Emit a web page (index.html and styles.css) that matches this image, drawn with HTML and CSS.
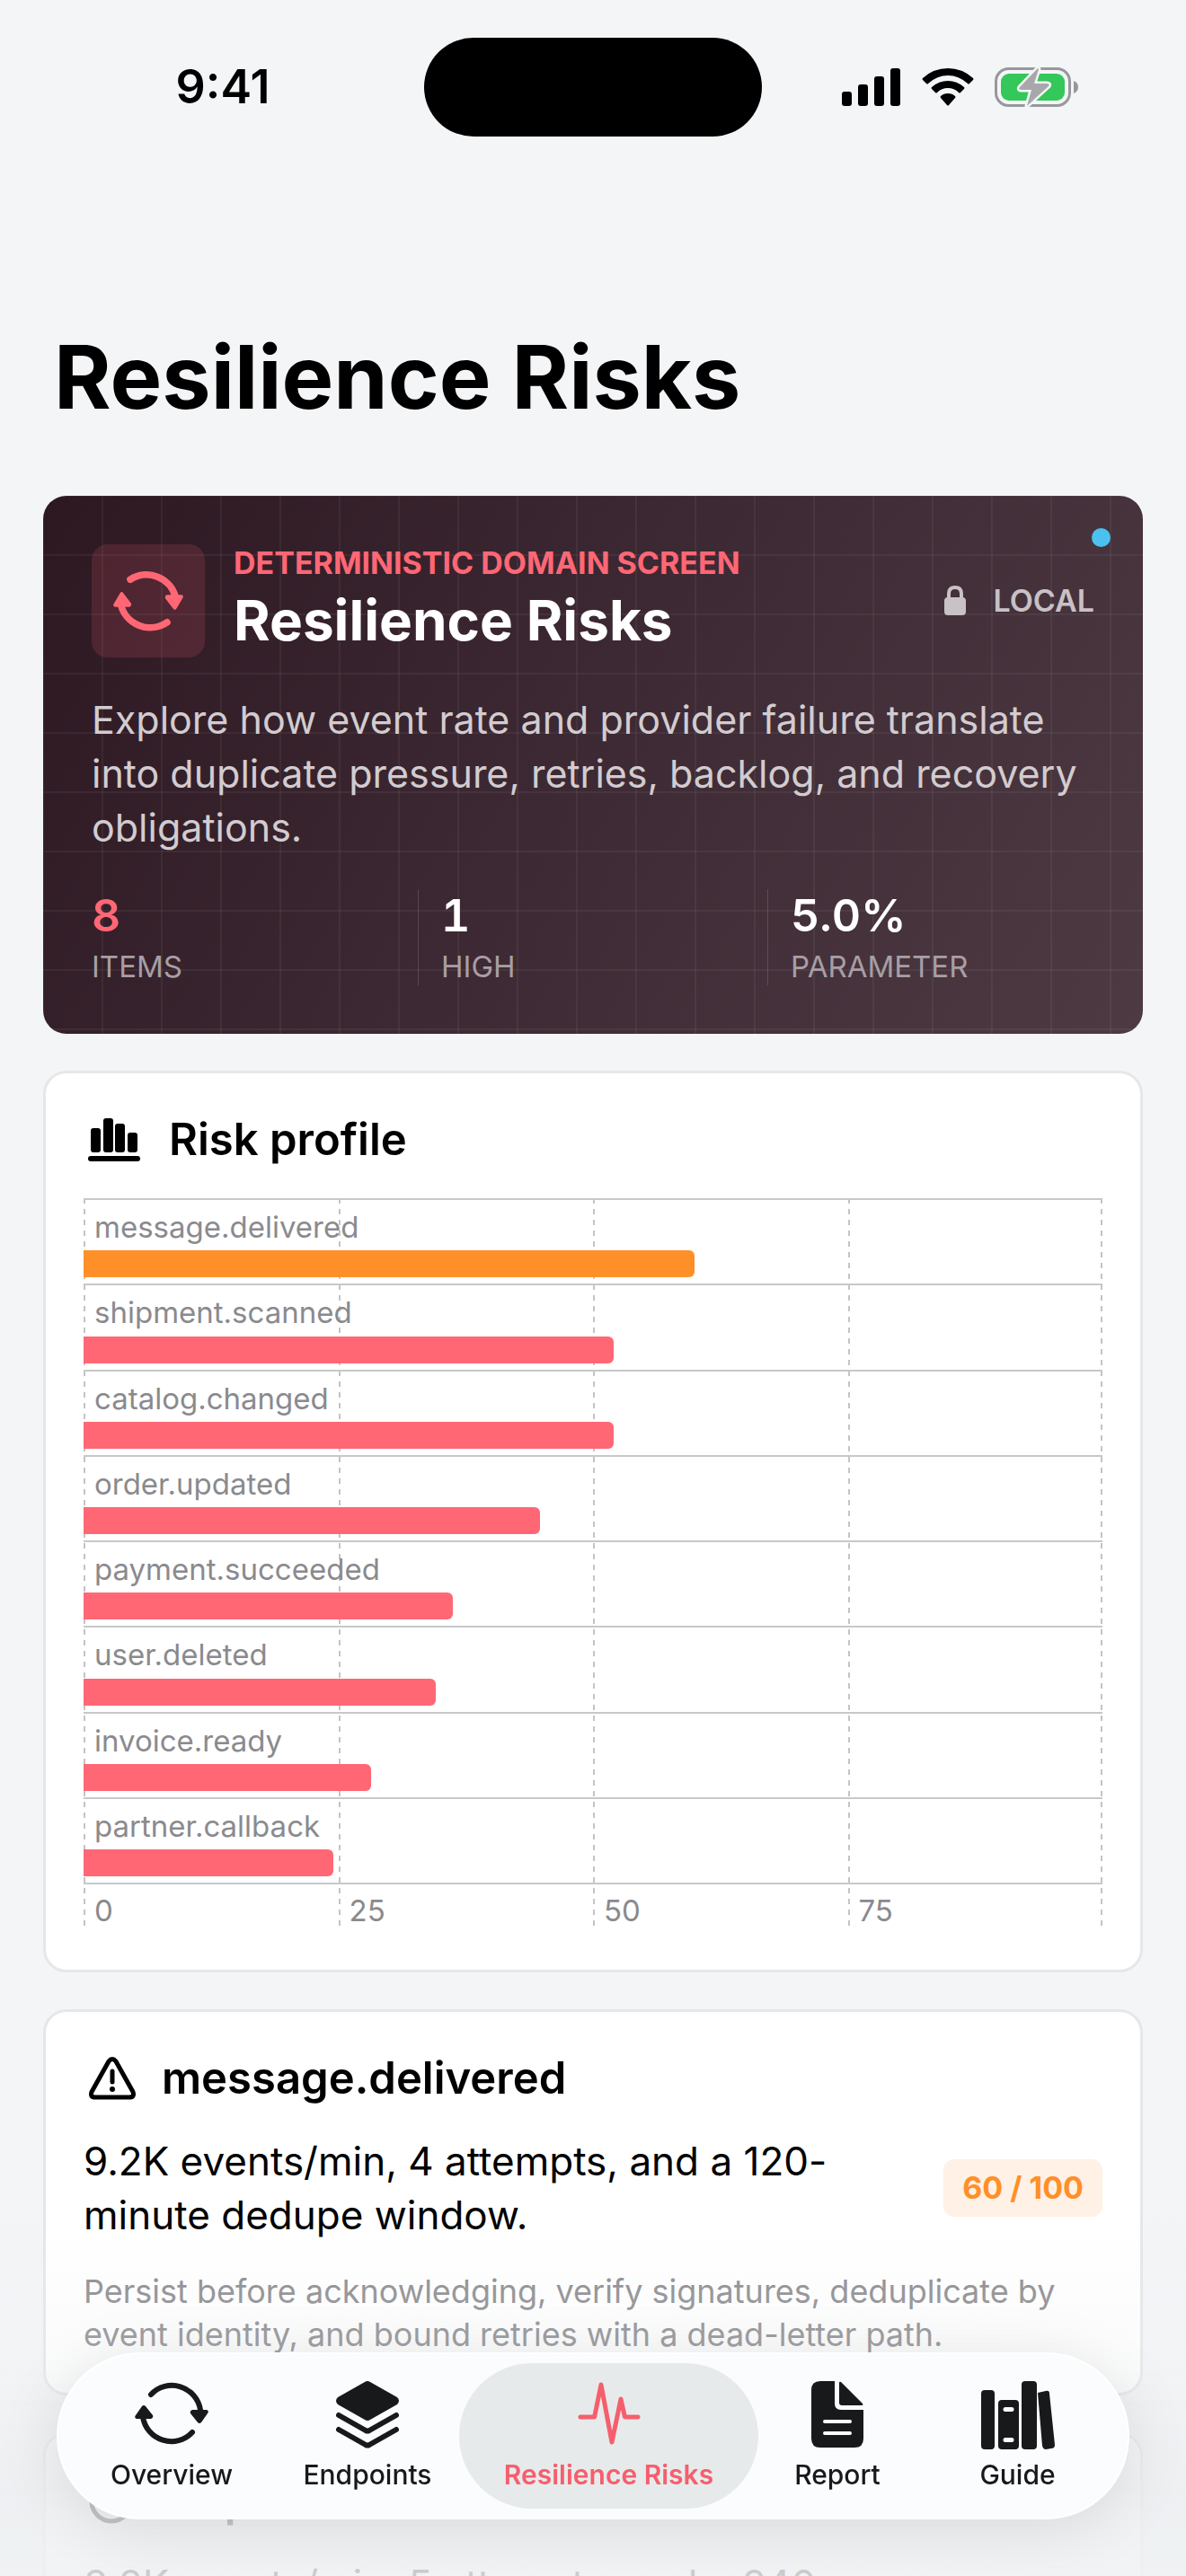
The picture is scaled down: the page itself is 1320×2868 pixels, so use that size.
FILE: index.html
```html
<!DOCTYPE html>
<html lang="en">
<head>
<meta charset="utf-8">
<meta name="viewport" content="width=device-width, initial-scale=1">
<title>Resilience Risks</title>
<link rel="stylesheet" href="styles.css">
</head>
<body>
<svg class="defs" aria-hidden="true">
  <symbol id="cycle" viewBox="0 0 84 72">
    <path d="M19 15A32 32 0 0 1 74 32M65 57A32 32 0 0 1 10 40" fill="none" stroke="currentColor" stroke-width="6" stroke-linecap="round"/>
    <path d="M65 32H81Q84 33 82 36L75 46Q73 48 71 46L63 36Q62 33 65 32ZM19 42H3Q0 41 2 38L9 28Q11 26 13 28L21 38Q22 41 19 42Z" fill="currentColor"/>
  </symbol>
  <symbol id="cycle-bold" viewBox="0 0 84 84">
    <path d="M21 17A35 35 0 0 1 74 38M64 67A35 35 0 0 1 10 46" fill="none" stroke="currentColor" stroke-width="8" stroke-linecap="round"/>
    <path d="M64 35H81Q84 36 82 39L75 51Q73 54 71 51L62 39Q61 36 64 35ZM20 49H3Q0 48 2 45L9 33Q11 30 13 33L22 45Q23 48 20 49Z" fill="currentColor"/>
  </symbol>
</svg>

<header class="status">
  <time class="status-time">9:41</time>
  <div class="island"></div>
  <div class="status-icons">
    <svg width="66" height="42" viewBox="0 0 66 42"><rect y="26" width="11" height="16" rx="3"/><rect x="18" y="18" width="11" height="24" rx="3"/><rect x="36" y="9" width="11" height="33" rx="3"/><rect x="54" width="11" height="42" rx="3"/></svg>
    <svg width="58" height="42" viewBox="0 0 58 42"><path d="M29 0Q45 0 57 11Q58 12 57 13L53 17Q52 18 51 17Q41 8 29 8T7 17Q6 18 5 17L1 13Q0 12 1 11Q13 0 29 0ZM29 14Q39 14 47 21Q48 22 47 23L43 27Q42 28 41 27Q36 22 29 22T17 27Q16 28 15 27L11 23Q10 22 11 21Q19 14 29 14ZM29 28Q34 28 37 31Q38 32 37 33L30 41Q29 42 28 41L21 33Q20 32 21 31Q24 28 29 28Z"/></svg>
    <svg width="94" height="46" viewBox="0 0 94 46"><rect x="1.500" y="2.500" width="82" height="41" rx="14" fill="none" stroke="#98989c" stroke-width="3"/><path d="M88 16Q93 18 93 23T88 30Z" fill="#98989c"/><rect x="7" y="8" width="71" height="30" rx="9" fill="#34c759"/><path d="M48 2L28 23Q26 26 30 26H41L36 44L60 22Q62 19 58 19H44L49 3Z" fill="#a8a8ac" stroke="#f3f5f7" stroke-width="5" stroke-linejoin="round" paint-order="stroke"/></svg>
  </div>
</header>

<main class="page">
  <h1 class="page-title">Resilience Risks</h1>

  <section class="hero">
    <span class="hero-dot"></span>
    <div class="hero-head">
      <div class="hero-tile"><svg width="80" height="82"><use href="#cycle-bold"/></svg></div>
      <div class="hero-names">
        <p class="eyebrow">DETERMINISTIC DOMAIN SCREEN</p>
        <h2 class="hero-title">Resilience Risks</h2>
      </div>
      <div class="local">
        <svg width="24" height="34" viewBox="0 0 24 34"><path d="M5 15V9Q5 2 12 2T19 9V15" fill="none" stroke="currentColor" stroke-width="4"/><rect y="13" width="24" height="20" rx="4" fill="currentColor"/></svg>
        <span>LOCAL</span>
      </div>
    </div>
    <p class="hero-text">Explore how event rate and provider failure translate into duplicate pressure, retries, backlog, and recovery obligations.</p>
    <dl class="stats">
      <div class="stat"><dt>ITEMS</dt><dd class="accent">8</dd></div>
      <div class="stat"><dt>HIGH</dt><dd>1</dd></div>
      <div class="stat"><dt>PARAMETER</dt><dd>5.0%</dd></div>
    </dl>
  </section>

  <section class="card">
    <h3 class="card-title chart-title">
      <svg width="58" height="48" viewBox="0 0 58 48"><rect x="3" y="11" width="11" height="27" rx="3"/><rect x="17" width="11" height="38" rx="3"/><rect x="30" y="6" width="11" height="32" rx="3"/><rect x="44" y="16" width="11" height="22" rx="3"/><rect y="42" width="58" height="6" rx="3"/></svg>
      <span>Risk profile</span>
    </h3>
    <div class="chart">
      <div class="gridlines"><i></i><i></i><i></i><i></i></div>
      <ul class="bars">
        <li>message.delivered<span class="bar high" style="width:60%"></span></li>
        <li>shipment.scanned<span class="bar" style="width:52%"></span></li>
        <li>catalog.changed<span class="bar" style="width:52%"></span></li>
        <li>order.updated<span class="bar" style="width:44.8%"></span></li>
        <li>payment.succeeded<span class="bar" style="width:36.2%"></span></li>
        <li>user.deleted<span class="bar" style="width:34.6%"></span></li>
        <li>invoice.ready<span class="bar" style="width:28.2%"></span></li>
        <li>partner.callback<span class="bar" style="width:24.5%"></span></li>
      </ul>
      <div class="axis"><span>0</span><span>25</span><span>50</span><span>75</span></div>
    </div>
  </section>

  <article class="card">
    <h3 class="card-title">
      <svg width="54" height="48" viewBox="0 0 54 48"><path d="M23 5Q27 0 31 5L50 39Q52 45 46 45H8Q2 45 4 39Z" fill="none" stroke="currentColor" stroke-width="5" stroke-linejoin="round"/><path d="M27 16V28" stroke="currentColor" stroke-width="5" stroke-linecap="round"/><circle cx="27" cy="36" r="3"/></svg>
      <span>message.delivered</span>
    </h3>
    <div class="card-row">
      <p class="card-text">9.2K events/min, 4 attempts, and a 120-minute dedupe window.</p>
      <span class="badge">60 / 100</span>
    </div>
    <p class="note">Persist before acknowledging, verify signatures, deduplicate by event identity, and bound retries with a dead-letter path.</p>
  </article>

  <article class="card">
    <h3 class="card-title">
      <svg width="54" height="50" viewBox="0 0 54 50"><circle cx="26" cy="25" r="22" fill="none" stroke="currentColor" stroke-width="5"/><path d="M17 25L24 32L36 17" fill="none" stroke="currentColor" stroke-width="5" stroke-linecap="round"/></svg>
      <span>shipment.scanned</span>
    </h3>
    <div class="card-row">
      <p class="card-text">8.2K events/min, 5 attempts, and a 240-minute dedupe window.</p>
      <span class="badge low">52 / 100</span>
    </div>
  </article>
</main>

<div class="fade"></div>
<nav class="tabs" aria-label="Sections">
  <a class="tab" href="#overview">
    <svg width="84" height="72"><use href="#cycle"/></svg>
    <span>Overview</span>
  </a>
  <a class="tab" href="#endpoints">
    <svg width="70" height="76" viewBox="0 0 70 76"><path d="M32 1Q35 -1 38 1L68 18Q72 22 68 26L38 43Q35 45 32 43L2 26Q-2 22 2 18Z"/><path d="M3 38L33 55Q35 56 37 55L67 38M3 54L33 71Q35 72 37 71L67 54" fill="none" stroke="currentColor" stroke-width="6" stroke-linecap="round" stroke-linejoin="round"/></svg>
    <span>Endpoints</span>
  </a>
  <a class="tab current" href="#risks" aria-current="page">
    <svg width="70" height="72" viewBox="0 0 70 72"><path d="M3 40H18Q19 40 19 38L26 4L38 68L48 20L52 38Q52 40 54 40H67" fill="none" stroke="currentColor" stroke-width="5" stroke-linecap="round" stroke-linejoin="round"/></svg>
    <span>Resilience Risks</span>
  </a>
  <a class="tab" href="#report">
    <svg width="58" height="74" viewBox="0 0 58 74"><path fill-rule="evenodd" d="M10 0H26V25Q26 32 33 32H58V64Q58 74 48 74H10Q0 74 0 64V10Q0 0 10 0ZM15 43A2 2 0 0 0 15 47H43A2 2 0 0 0 43 43ZM15 56A2 2 0 0 0 15 60H43A2 2 0 0 0 43 56Z"/><path d="M31 2Q31 0 33 1L57 25Q58 27 56 27H34Q31 27 31 24Z"/></svg>
    <span>Report</span>
  </a>
  <a class="tab" href="#guide">
    <svg width="82" height="76" viewBox="0 0 82 76"><rect y="10" width="15" height="66" rx="4"/><path fill-rule="evenodd" d="M23 21H38Q42 21 42 25V72Q42 76 38 76H23Q19 76 19 72V25Q19 21 23 21ZM27 29A2 2 0 0 0 27 34H34A2 2 0 0 0 34 29ZM27 63A2 2 0 0 0 27 68H34A2 2 0 0 0 34 63Z"/><rect x="45" width="17" height="76" rx="4"/><path d="M63 13L72 11Q76 10 76 14L82 71Q82 75 78 75L72 76Q69 76 68 72Z"/></svg>
    <span>Guide</span>
  </a>
</nav>
</body>
</html>
```
FILE: styles.css
```css
* { box-sizing: border-box; }
body, h1, h2, h3, p, dl, dd, ul { margin: 0; padding: 0; }
body {
  display: flex;
  flex-direction: column;
  height: 100vh;
  overflow: hidden;
  background: #f3f5f7;
  color: #000;
  font-family: Inter, "Liberation Sans", sans-serif;
}
.defs { display: none; }

.status {
  display: grid;
  grid-template-columns: 1fr 376px 1fr;
  align-items: center;
  flex: none;
  padding-top: 42px;
}
.status-time { justify-self: center; padding-left: 24px; font-size: 52px; font-weight: 600; line-height: 60px; }
.island { height: 110px; border-radius: 55px; background: #000; }
.status-icons { display: flex; align-items: center; gap: 23px; padding-left: 89px; }

.page { flex: 1; min-height: 0; overflow: hidden; display: flex; flex-direction: column; gap: 41px; padding: 208px 48px 0; }
.page > * { flex: none; }
.page-title { padding: 0 12px; margin-bottom: 31px; font-size: 97px; font-weight: 700; line-height: 120px; }

.hero {
  position: relative;
  padding: 54px;
  border-radius: 26px;
  color: #fff;
  background: linear-gradient(120deg, #2d1822, #3c2832 45%, #4d3a43);
}
.hero::before {
  content: "";
  position: absolute;
  inset: 0;
  border-radius: 26px;
  background:
    linear-gradient(90deg, rgba(255,255,255,.05) 2px, transparent 2px) 65px 0 / 66px 100%,
    linear-gradient(rgba(255,255,255,.05) 2px, transparent 2px) 0 65px / 100% 66px;
}
.hero > * { position: relative; }
.hero > .hero-dot { position: absolute; top: 36px; right: 36px; width: 21px; height: 21px; border-radius: 50%; background: #4bc1ef; }
.hero-head { display: flex; align-items: center; gap: 32px; }
.hero-tile { display: grid; place-items: center; width: 126px; height: 126px; border-radius: 18px; background: rgba(255,103,117,.15); color: #ff6775; }
.hero-names { display: grid; flex: 1; gap: 4px; }
.eyebrow { color: #ff6775; font-size: 34px; font-weight: 700; line-height: 40px; }
.hero-title { font-size: 62px; font-weight: 700; line-height: 80px; }
.local { display: flex; align-items: center; gap: 30px; color: #c8c1c5; font-size: 34px; font-weight: 600; line-height: 40px; }
.hero-text { margin: 39px 0; color: #d2ccd0; font-size: 43px; line-height: 60px; }
.stats { display: grid; grid-template-columns: repeat(3, 1fr); gap: 51px; }
.stat { position: relative; display: flex; flex-direction: column-reverse; gap: 7px; }
.stat + .stat::before { content: ""; position: absolute; left: -26px; top: 0; bottom: 0; width: 1px; background: rgba(255,255,255,.14); }
.stat dt { color: #a89ea4; font-size: 33px; line-height: 42px; }
.stat dd { font-size: 50px; font-weight: 600; line-height: 58px; font-variant-numeric: tabular-nums; }
.stat .accent { color: #ff6775; }

.card { padding: 44px 42px 41px; border: 3px solid #e5e7e9; border-radius: 26px; background: #fff; }
.card-title { display: flex; align-items: center; gap: 28px; padding-left: 5px; font-size: 49px; font-weight: 600; line-height: 60px; }
.chart-title { gap: 32px; }

.chart { position: relative; margin: 35px 0 6px; }
.gridlines { position: absolute; inset: 0; display: grid; grid-template-columns: repeat(4, 1fr); }
.gridlines i {
  background:
    repeating-linear-gradient(#c4c4c6 0 6px, transparent 6px 12px) 0 0 / 2px 100% no-repeat;
}
.gridlines i:last-child {
  background:
    repeating-linear-gradient(#c4c4c6 0 6px, transparent 6px 12px) 0 0 / 2px 100% no-repeat,
    repeating-linear-gradient(#c4c4c6 0 6px, transparent 6px 12px) 100% 0 / 2px 100% no-repeat;
}
.bars { position: relative; display: grid; grid-template-rows: repeat(8, 1fr); height: 764px; border-bottom: 2px solid #c8c8ca; list-style: none; }
.bars li { display: flex; flex-direction: column; justify-content: space-between; padding: 10px 0 7px; border-top: 2px solid #c8c8ca; color: #8a8a8e; font-size: 33px; line-height: 40px; text-indent: 12px; }
.bar { height: 30px; border-radius: 0 6px 6px 0; background: #ff6775; }
.bar.high { background: #ff8f28; }
.axis { position: relative; display: grid; grid-template-columns: repeat(4, 1fr); padding-top: 10px; color: #8a8a8e; font-size: 33px; line-height: 38px; text-indent: 12px; }

.card-row { display: flex; align-items: center; justify-content: space-between; gap: 40px; margin-top: 32px; }
.card-text { flex: 1; max-width: 860px; font-size: 44px; line-height: 60px; }
.badge { padding: 12px 21px; border-radius: 12px; background: #fff1e5; color: #ff8f28; font-size: 34px; font-weight: 700; line-height: 40px; }
.badge.low { background: #ffedef; color: #ff6775; }
.note { margin-top: 31px; color: #8a8a8e; font-size: 36px; line-height: 48px; }

.fade {
  position: fixed;
  inset: auto 0 0;
  height: 400px;
  background: linear-gradient(rgba(238,240,242,0), rgba(238,240,242,.25) 40%, rgba(236,238,240,.8) 75%, rgba(239,241,243,.85));
}
.tabs {
  position: fixed;
  inset: auto 63px 63px;
  display: grid;
  grid-template-columns: 232fr 204fr 333fr 176fr 225fr;
  padding: 10px;
  border: 2px solid #fff;
  border-radius: 93px;
  background: #fbfcfe;
  box-shadow: 0 10px 70px rgba(0,0,0,.1);
}
.tab { display: flex; flex-direction: column; align-items: center; justify-content: space-between; height: 162px; padding: 20px 0; border-radius: 81px; color: #18191b; font-size: 30px; font-weight: 500; line-height: 36px; text-decoration: none; white-space: nowrap; }
.tab svg { fill: currentColor; }
.tab.current { background: #e7eaeb; color: #f55f6d; font-weight: 600; }
```
